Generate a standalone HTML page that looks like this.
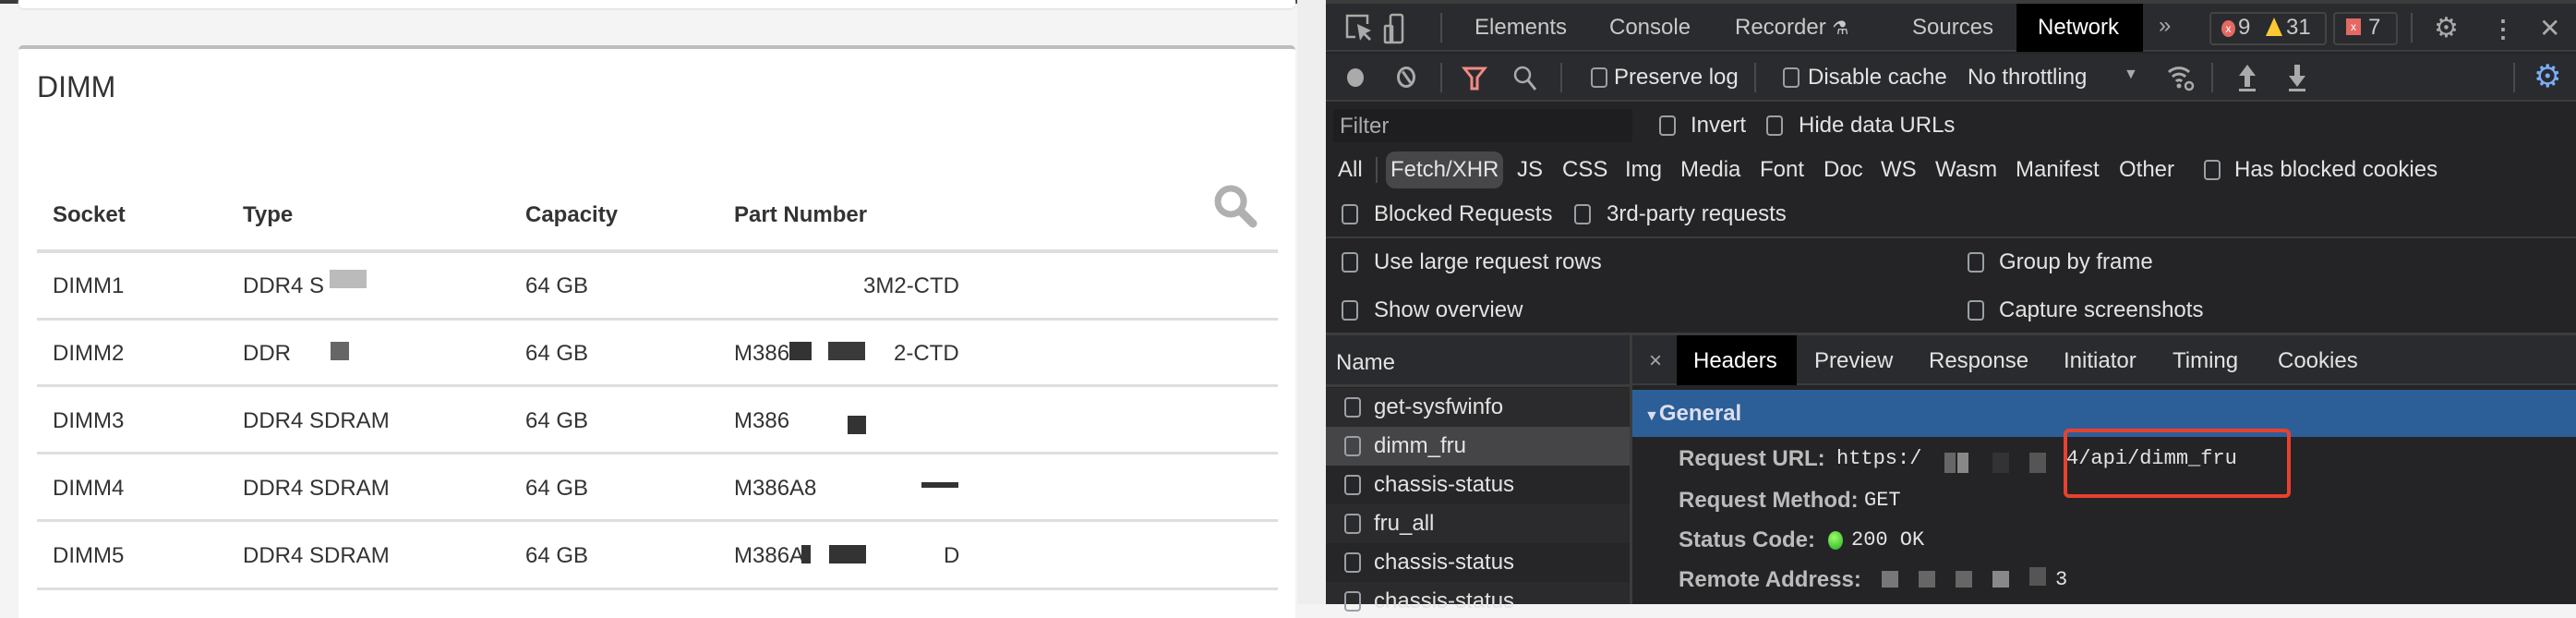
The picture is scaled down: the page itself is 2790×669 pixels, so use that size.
<!DOCTYPE html>
<html><head><meta charset="utf-8"><style>
*{margin:0;padding:0;box-sizing:border-box}
body{width:2790px;height:654px;overflow:hidden;position:relative;background:#f4f4f4;font-family:"Liberation Sans",Arial,sans-serif}
.a{position:absolute;white-space:nowrap}
.l{color:#333;font-size:24px}
.h{color:#333;font-size:24px;font-weight:bold}
.line{position:absolute;left:40px;width:1344px;height:3px;background:#dedede}
.d{color:#e3e3e3;font-size:24px;line-height:28px}
.cb{position:absolute;width:18px;height:22px;border:2px solid #9aa0a6;border-radius:4px}
.sep{position:absolute;width:2px;background:#4a4a4a}
.bl{position:absolute;background:#555}
</style></head><body>
<div class="a" style="left:0;top:0;width:1436px;height:4px;background:#3a3a3a"></div>
<div class="a" style="left:20px;top:0;width:1383px;height:9px;background:#fff;border-radius:0 0 6px 6px;box-shadow:0 1px 2px #ddd"></div>
<div class="a" style="left:20px;top:49px;width:1383px;height:620px;background:#fff;border-top:4px solid #bdbdbd;border-radius:5px 5px 0 0"></div>
<div class="a" style="left:1405px;top:0;width:31px;height:654px;background:#eeeeee"></div>
<div class="a" style="left:40px;top:76px;font-size:32px;color:#333">DIMM</div>
<svg class="a" style="left:1314px;top:199px" width="48" height="48" viewBox="0 0 48 48"><circle cx="19" cy="19" r="14" fill="none" stroke="#b0b0b0" stroke-width="7"/><line x1="30" y1="30" x2="43" y2="43" stroke="#b0b0b0" stroke-width="9" stroke-linecap="round"/></svg>
<div class="a h" style="left:57px;top:219px">Socket</div>
<div class="a h" style="left:263px;top:219px">Type</div>
<div class="a h" style="left:569px;top:219px">Capacity</div>
<div class="a h" style="left:795px;top:219px">Part Number</div>
<div class="line" style="top:270px;height:4px"></div>
<div class="a l" style="left:57px;top:296px">DIMM1</div><div class="a l" style="left:263px;top:296px">DDR4 S</div><div class="a l" style="left:569px;top:296px">64 GB</div><div class="a l" style="left:935px;top:296px">3M2-CTD</div>
<div class="bl" style="left:357px;top:292px;width:40px;height:20px;background:#bbb"></div>
<div class="line" style="top:344px"></div>
<div class="a l" style="left:57px;top:369px">DIMM2</div><div class="a l" style="left:263px;top:369px">DDR</div><div class="a l" style="left:569px;top:369px">64 GB</div><div class="a l" style="left:795px;top:369px">M386</div><div class="a l" style="left:968px;top:369px">2-CTD</div>
<div class="bl" style="left:358px;top:370px;width:20px;height:20px;background:#666"></div>
<div class="bl" style="left:855px;top:370px;width:24px;height:20px;background:#333"></div><div class="bl" style="left:897px;top:370px;width:40px;height:20px;background:#3a3a3a"></div>
<div class="line" style="top:416px"></div>
<div class="a l" style="left:57px;top:442px">DIMM3</div><div class="a l" style="left:263px;top:442px">DDR4 SDRAM</div><div class="a l" style="left:569px;top:442px">64 GB</div><div class="a l" style="left:795px;top:442px">M386</div>
<div class="bl" style="left:918px;top:450px;width:20px;height:20px;background:#333"></div>
<div class="line" style="top:489px"></div>
<div class="a l" style="left:57px;top:515px">DIMM4</div><div class="a l" style="left:263px;top:515px">DDR4 SDRAM</div><div class="a l" style="left:569px;top:515px">64 GB</div><div class="a l" style="left:795px;top:515px">M386A8</div>
<div class="bl" style="left:998px;top:522px;width:40px;height:6px;background:#333"></div>
<div class="line" style="top:562px"></div>
<div class="a l" style="left:57px;top:588px">DIMM5</div><div class="a l" style="left:263px;top:588px">DDR4 SDRAM</div><div class="a l" style="left:569px;top:588px">64 GB</div><div class="a l" style="left:795px;top:588px">M386A</div><div class="a l" style="left:1022px;top:588px">D</div>
<div class="bl" style="left:868px;top:590px;width:10px;height:20px;background:#333"></div><div class="bl" style="left:898px;top:590px;width:40px;height:20px;background:#333"></div>
<div class="line" style="top:636px"></div>

<div class="a" style="left:1436px;top:0;width:1354px;height:654px;background:#242426"></div>
<div class="a" style="left:1436px;top:0;width:1354px;height:4px;background:#3c3c3c"></div>
<div class="a" style="left:1436px;top:4px;width:1354px;height:52px;background:#2a2b2e;border-bottom:2px solid #3c3c3c"></div>
<div class="a" style="left:2184px;top:4px;width:137px;height:52px;background:#000"></div>
<svg class="a" style="left:1456px;top:14px" width="70" height="34" viewBox="0 0 70 34"><path d="M12 26H3V3h22v9" fill="none" stroke="#aaa" stroke-width="2.5"/><path d="M14 12l3 18 4-6 6 6 2-2-6-6 6-3z" fill="#aaa"/><rect x="50" y="2" width="13" height="30" rx="2" fill="none" stroke="#aaa" stroke-width="2.5"/><rect x="44" y="14" width="8" height="18" rx="1" fill="none" stroke="#aaa" stroke-width="2.5"/></svg>
<div class="sep" style="left:1560px;top:14px;height:32px"></div>
<div class="a d" style="left:1597px;top:16px;color:#c8c8c8">Elements</div>
<div class="a d" style="left:1743px;top:16px;color:#c8c8c8">Console</div>
<div class="a d" style="left:1879px;top:16px;color:#c8c8c8">Recorder <span style="font-size:20px">⚗</span></div>
<div class="a d" style="left:2071px;top:16px;color:#c8c8c8">Sources</div>
<div class="a d" style="left:2207px;top:16px;color:#fff">Network</div>
<div class="a d" style="left:2338px;top:14px;color:#aaa">»</div>
<div class="a" style="left:2393px;top:13px;width:127px;height:36px;border:2px solid #444;border-radius:4px"></div>
<div class="a" style="left:2406px;top:22px;width:15px;height:18px;border-radius:50%;background:#e46962;color:#fff;font-size:12px;text-align:center;line-height:18px">x</div>
<div class="a d" style="left:2424px;top:16px;color:#c8c8c8">9</div>
<div class="a" style="left:2454px;top:19px;width:0;height:0;border-left:9px solid transparent;border-right:9px solid transparent;border-bottom:20px solid #fcc934"></div>
<div class="a d" style="left:2476px;top:16px;color:#c8c8c8">31</div>
<div class="a" style="left:2527px;top:13px;width:70px;height:36px;border:2px solid #444;border-radius:4px"></div>
<div class="a" style="left:2541px;top:20px;width:16px;height:18px;background:#e46962;color:#fff;font-size:12px;text-align:center;line-height:18px">x</div>
<div class="a d" style="left:2565px;top:16px;color:#c8c8c8">7</div>
<div class="sep" style="left:2611px;top:14px;height:32px"></div>
<div class="a" style="left:2636px;top:14px;font-size:30px;color:#aaa;line-height:34px">⚙</div>
<div class="a" style="left:2698px;top:14px;font-size:26px;color:#aaa;line-height:34px;font-weight:bold">⋮</div>
<div class="a" style="left:2750px;top:15px;font-size:28px;color:#aaa;line-height:32px">✕</div>

<div class="a" style="left:1436px;top:58px;width:1354px;height:52px;background:#2a2b2e;border-bottom:2px solid #3c3c3c"></div>
<div class="a" style="left:1459px;top:74px;width:18px;height:20px;border-radius:50%;background:#aaa"></div>
<div class="a" style="left:1513px;top:72px;width:20px;height:23px;border-radius:50%;border:3px solid #aaa"></div>
<div class="a" style="left:1516px;top:82px;width:15px;height:3px;background:#aaa;transform:rotate(55deg)"></div>
<div class="sep" style="left:1560px;top:68px;height:32px"></div>
<svg class="a" style="left:1583px;top:71px" width="28" height="28" viewBox="0 0 28 28"><path d="M3 3h22l-8 10v12h-6V13z" fill="none" stroke="#f28b82" stroke-width="3"/></svg>
<svg class="a" style="left:1638px;top:70px" width="28" height="30" viewBox="0 0 28 30"><circle cx="11" cy="11" r="8" fill="none" stroke="#aaa" stroke-width="2.5"/><line x1="17" y1="17" x2="25" y2="27" stroke="#aaa" stroke-width="3"/></svg>
<div class="sep" style="left:1690px;top:68px;height:32px"></div>
<div class="cb" style="left:1723px;top:73px"></div><div class="a d" style="left:1748px;top:70px">Preserve log</div>
<div class="sep" style="left:1900px;top:68px;height:32px"></div>
<div class="cb" style="left:1931px;top:73px"></div><div class="a d" style="left:1958px;top:70px">Disable cache</div>
<div class="a d" style="left:2131px;top:70px">No throttling</div>
<div class="a" style="left:2300px;top:72px;color:#aaa;font-size:16px">▼</div>
<svg class="a" style="left:2346px;top:68px" width="32" height="32" viewBox="0 0 32 32"><path d="M3 10a16 16 0 0 1 22 0M7 15a10 10 0 0 1 14 0M11 20a4 4 0 0 1 6 0" fill="none" stroke="#aaa" stroke-width="3"/><circle cx="14" cy="25" r="2.5" fill="#aaa"/><circle cx="25" cy="25" r="4" fill="none" stroke="#aaa" stroke-width="2.5"/></svg>
<div class="sep" style="left:2395px;top:68px;height:32px"></div>
<svg class="a" style="left:2422px;top:68px" width="24" height="32" viewBox="0 0 24 32"><path d="M12 2L3 14h6v12h6V14h6z" fill="#aaa"/><rect x="3" y="28" width="18" height="3" fill="#aaa"/></svg>
<svg class="a" style="left:2476px;top:68px" width="24" height="32" viewBox="0 0 24 32"><path d="M12 26L3 14h6V2h6v12h6z" fill="#aaa"/><rect x="3" y="28" width="18" height="3" fill="#aaa"/></svg>
<div class="sep" style="left:2722px;top:68px;height:32px"></div>
<div class="a" style="left:2744px;top:64px;font-size:34px;color:#7cacf8;line-height:38px">⚙</div>

<div class="a" style="left:1444px;top:118px;width:324px;height:36px;background:#1e1e20"></div>
<div class="a d" style="left:1451px;top:123px;color:#aaa">Filter</div>
<div class="cb" style="left:1797px;top:125px"></div><div class="a d" style="left:1831px;top:122px">Invert</div>
<div class="cb" style="left:1913px;top:125px"></div><div class="a d" style="left:1948px;top:122px">Hide data URLs</div>
<div class="a d" style="left:1449px;top:170px">All</div>
<div class="sep" style="left:1490px;top:170px;height:28px"></div>
<div class="a" style="left:1501px;top:164px;width:127px;height:40px;background:#474749;border-radius:10px"></div>
<div class="a d" style="left:1506px;top:170px">Fetch/XHR</div>
<div class="a d" style="left:1643px;top:170px">JS</div><div class="a d" style="left:1692px;top:170px">CSS</div>
<div class="a d" style="left:1760px;top:170px">Img</div><div class="a d" style="left:1820px;top:170px">Media</div>
<div class="a d" style="left:1906px;top:170px">Font</div><div class="a d" style="left:1975px;top:170px">Doc</div>
<div class="a d" style="left:2037px;top:170px">WS</div><div class="a d" style="left:2096px;top:170px">Wasm</div>
<div class="a d" style="left:2183px;top:170px">Manifest</div><div class="a d" style="left:2295px;top:170px">Other</div>
<div class="cb" style="left:2387px;top:173px"></div><div class="a d" style="left:2420px;top:170px">Has blocked cookies</div>
<div class="cb" style="left:1453px;top:221px"></div><div class="a d" style="left:1488px;top:218px">Blocked Requests</div>
<div class="cb" style="left:1705px;top:221px"></div><div class="a d" style="left:1740px;top:218px">3rd-party requests</div>
<div class="a" style="left:1436px;top:256px;width:1354px;height:2px;background:#3c3c3c"></div>
<div class="cb" style="left:1453px;top:273px"></div><div class="a d" style="left:1488px;top:270px">Use large request rows</div>
<div class="cb" style="left:2131px;top:273px"></div><div class="a d" style="left:2165px;top:270px">Group by frame</div>
<div class="cb" style="left:1453px;top:325px"></div><div class="a d" style="left:1488px;top:322px">Show overview</div>
<div class="cb" style="left:2131px;top:325px"></div><div class="a d" style="left:2165px;top:322px">Capture screenshots</div>
<div class="a" style="left:1436px;top:360px;width:1354px;height:3px;background:#3c3c3c"></div>

<div class="a" style="left:1436px;top:363px;width:330px;height:56px;background:#2a2b2e;border-bottom:3px solid #3c3c3c"></div>
<div class="a d" style="left:1447px;top:379px">Name</div>
<div class="a" style="left:1436px;top:420px;width:330px;height:42px;background:#2b2b2d"></div>
<div class="a" style="left:1436px;top:462px;width:330px;height:42px;background:#454547"></div>
<div class="a" style="left:1436px;top:504px;width:330px;height:42px;background:#262628"></div>
<div class="a" style="left:1436px;top:546px;width:330px;height:42px;background:#2b2b2d"></div>
<div class="a" style="left:1436px;top:588px;width:330px;height:42px;background:#262628"></div>
<div class="a" style="left:1436px;top:630px;width:330px;height:24px;background:#2b2b2d"></div>
<div class="cb" style="left:1456px;top:430px"></div><div class="a d" style="left:1488px;top:427px">get-sysfwinfo</div>
<div class="cb" style="left:1456px;top:472px"></div><div class="a d" style="left:1488px;top:469px">dimm_fru</div>
<div class="cb" style="left:1456px;top:514px"></div><div class="a d" style="left:1488px;top:511px">chassis-status</div>
<div class="cb" style="left:1456px;top:556px"></div><div class="a d" style="left:1488px;top:553px">fru_all</div>
<div class="cb" style="left:1456px;top:598px"></div><div class="a d" style="left:1488px;top:595px">chassis-status</div>
<div class="cb" style="left:1456px;top:640px"></div><div class="a d" style="left:1488px;top:637px">chassis-status</div>
<div class="a" style="left:1765px;top:363px;width:3px;height:291px;background:#3c3c3c"></div>

<div class="a" style="left:1768px;top:363px;width:1022px;height:54px;background:#2a2b2e;border-bottom:2px solid #3c3c3c"></div>
<div class="a d" style="left:1786px;top:377px;color:#aaa">×</div>
<div class="a" style="left:1816px;top:363px;width:130px;height:54px;background:#000"></div>
<div class="a d" style="left:1834px;top:377px;color:#fff">Headers</div>
<div class="a d" style="left:1965px;top:377px">Preview</div><div class="a d" style="left:2089px;top:377px">Response</div>
<div class="a d" style="left:2235px;top:377px">Initiator</div><div class="a d" style="left:2353px;top:377px">Timing</div>
<div class="a d" style="left:2467px;top:377px">Cookies</div>
<div class="a" style="left:1768px;top:422px;width:1022px;height:51px;background:#2c5f98"></div>
<div class="a d" style="left:1781px;top:434px;font-weight:bold;color:#dde"><span style="font-size:16px">▼</span>General</div>
<div class="a d" style="left:1818px;top:483px;font-weight:bold;color:#bbb">Request URL:</div>
<div class="a" style="left:1989px;top:484px;font-family:'Liberation Mono',monospace;font-size:22px;color:#e3e3e3">https:/</div>
<div class="bl" style="left:2106px;top:490px;width:12px;height:22px;background:#666"></div>
<div class="bl" style="left:2120px;top:490px;width:12px;height:22px;background:#888"></div>
<div class="bl" style="left:2158px;top:490px;width:18px;height:22px;background:#333"></div>
<div class="bl" style="left:2198px;top:490px;width:18px;height:22px;background:#555"></div>
<div class="a" style="left:2238px;top:484px;font-family:'Liberation Mono',monospace;font-size:22px;color:#e3e3e3">4/api/dimm_fru</div>
<div class="a" style="left:2235px;top:464px;width:246px;height:75px;border:4px solid #e8412e;border-radius:6px"></div>
<div class="a d" style="left:1818px;top:528px;font-weight:bold;color:#bbb">Request Method:</div>
<div class="a" style="left:2019px;top:529px;font-family:'Liberation Mono',monospace;font-size:22px;color:#e3e3e3">GET</div>
<div class="a d" style="left:1818px;top:571px;font-weight:bold;color:#bbb">Status Code:</div>
<div class="a" style="left:1980px;top:575px;width:16px;height:20px;border-radius:50%;background:radial-gradient(circle at 40% 35%,#9f6,#2a2)"></div>
<div class="a" style="left:2005px;top:572px;font-family:'Liberation Mono',monospace;font-size:22px;color:#e3e3e3">200 OK</div>
<div class="a d" style="left:1818px;top:614px;font-weight:bold;color:#bbb">Remote Address:</div>
<div class="bl" style="left:2038px;top:618px;width:18px;height:18px;background:#777"></div>
<div class="bl" style="left:2078px;top:618px;width:18px;height:18px;background:#666"></div>
<div class="bl" style="left:2118px;top:618px;width:18px;height:18px;background:#666"></div>
<div class="bl" style="left:2158px;top:618px;width:18px;height:18px;background:#888"></div>
<div class="bl" style="left:2198px;top:614px;width:18px;height:20px;background:#555"></div>
<div class="a" style="left:2226px;top:615px;font-family:'Liberation Mono',monospace;font-size:22px;color:#e3e3e3">3</div>
</body></html>
